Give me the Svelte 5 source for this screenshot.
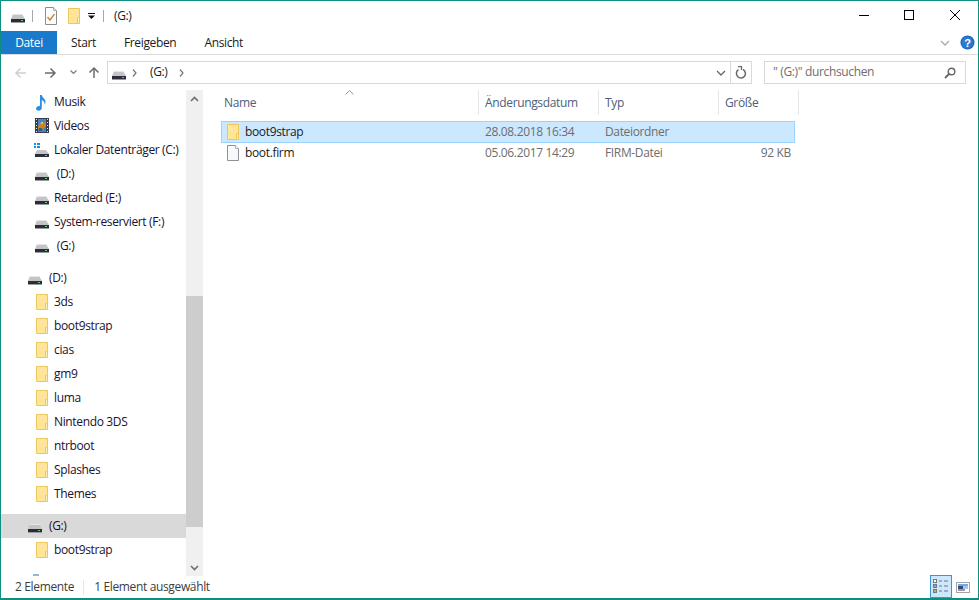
<script>
  const group1 = [
    { icon: 'music', label: 'Musik' },
    { icon: 'video', label: 'Videos' },
    { icon: 'sys', label: 'Lokaler Datenträger (C:)' },
    { icon: 'drive', label: ' (D:)' },
    { icon: 'drive', label: 'Retarded (E:)' },
    { icon: 'drive', label: 'System-reserviert (F:)' },
    { icon: 'drive', label: ' (G:)' }
  ];
  const dItems = ['3ds', 'boot9strap', 'cias', 'gm9', 'luma', 'Nintendo 3DS', 'ntrboot', 'Splashes', 'Themes'];
</script>

{#snippet drive()}
  <svg class="ico" width="16" height="16" viewBox="0 0 16 16">
    <path d="M4 6h9l3 5H2z" fill="#c4c4c6" />
    <path d="M4 6h9l.6 1H3.400z" fill="#e6e6e8" />
    <rect x="2" y="11" width="14" height="3" fill="#2c2c3a" />
    <rect x="2" y="14" width="14" height="1" fill="#9a9aa2" />
    <rect x="12" y="12" width="2" height="1" fill="#5fd35f" />
  </svg>
{/snippet}

{#snippet folder()}
  <svg class="ico" width="16" height="16" viewBox="0 0 16 16">
    <path d="M3.500 .5h11v15h-11z" fill="#ffe595" stroke="#eec65c" />
    <path d="M12.500 9.500h2v6h-2z" fill="#fff2c0" stroke="#eec65c" />
    <rect x="7" y="4" width="1" height="1" fill="#fff6d8" />
  </svg>
{/snippet}

{#snippet navIcon(kind)}
  {#if kind === 'music'}
    <svg class="ico" width="16" height="17" viewBox="0 0 16 17">
      <path d="M7 1h1.800c.3 2.700 3.700 3.500 3.700 7 0 1-.3 1.900-.9 2.600.2-2.400-1.300-4-2.800-4.600V14c0 1.600-1.600 2.700-3.200 2.700S3 15.900 3 14.600s1.700-2.700 3.200-2.700c.4 0 .6.100.8.200z" fill="#2f8ddb" />
    </svg>
  {:else if kind === 'video'}
    <svg class="ico" width="16" height="16" viewBox="0 0 16 16">
      <rect x="2" y="0" width="14" height="15" fill="#3a3a4c" />
      <path d="M3 1.500h1M3 4.500h1M3 7.500h1M3 10.500h1M3 13.500h1M14 1.500h1M14 4.500h1M14 7.500h1M14 10.500h1M14 13.500h1" stroke="#e8e8e8" />
      <rect x="5" y="1" width="8" height="13" fill="#3c8ac8" />
      <path d="M5 8l3-4 2 2 3-3v5l-3 3H5z" fill="#c9822e" />
      <rect x="8" y="4" width="2" height="2" fill="#e8c25a" />
      <rect x="6" y="10" width="3" height="3" fill="#2c5f8f" />
    </svg>
  {:else if kind === 'sys'}
    <svg class="ico" width="16" height="16" viewBox="0 0 16 16">
      <path d="M4 8h9l3 4H2z" fill="#c4c4c6" />
      <rect x="2" y="12" width="14" height="3" fill="#2c2c3a" />
      <rect x="12" y="13" width="2" height="1" fill="#5fd35f" />
      <path d="M1 1h2v2H1zM4 1h3v2H4zM1 4h2v2H1zM4 4h3v2H4z" fill="#1b8fe0" />
    </svg>
  {:else}
    {@render drive()}
  {/if}
{/snippet}

{#snippet chevDown(color)}
  <svg width="10" height="6" viewBox="0 0 10 6"><path d="M1 1l4 4 4-4" fill="none" stroke={color} stroke-width="1.300" /></svg>
{/snippet}

<div class="window">
  <header class="titlebar">
    <div class="qat">
      {@render drive()}
      <span class="qsep"></span>
      <svg class="ico" width="16" height="18" viewBox="0 0 16 18">
        <path d="M2.500 .5h8l3 3v14h-11z" fill="#fcfcfc" stroke="#8e8a94" />
        <path d="M10.500 .5v3h3" fill="#e8e8e8" stroke="#b0b0b0" />
        <path d="M4.500 10l2.500 3 4.500-6" fill="none" stroke="#c48a42" stroke-width="1.400" />
      </svg>
      <span class="qfold">{@render folder()}</span>
      <svg class="qdrop" width="7" height="6" viewBox="0 0 7 6"><rect x="0" y="0" width="7" height="1" fill="#111" /><path d="M0 2.500h7L3.500 6z" fill="#111" /></svg>
      <span class="qsep last"></span>
      <span class="wintitle up1">(G:)</span>
    </div>
    <div class="controls">
      <svg class="ctl-min" width="10" height="10" viewBox="0 0 10 10"><path d="M0 5.500h10" stroke="#000" /></svg>
      <svg width="10" height="10" viewBox="0 0 10 10"><rect x=".5" y=".5" width="9" height="9" fill="none" stroke="#000" /></svg>
      <svg width="10" height="10" viewBox="0 0 10 10"><path d="M0 0l10 10M10 0L0 10" stroke="#000" stroke-width="1" /></svg>
    </div>
  </header>

  <div class="ribbon">
    <span class="tab active">Datei</span>
    <span class="tab start">Start</span>
    <span class="tab share">Freigeben</span>
    <span class="tab view">Ansicht</span>
    <span class="ribbon-right">
      {@render chevDown('#a9a9a9')}
      <svg class="help" width="15" height="15" viewBox="0 0 15 15">
        <circle cx="7.500" cy="7.500" r="7" fill="#1a63b8" />
        <circle cx="7.500" cy="7.500" r="6" fill="#2a7ad0" />
        <text x="7.500" y="11.500" text-anchor="middle" class="q">?</text>
      </svg>
    </span>
  </div>

  <div class="navbar">
    <svg class="arrow first" width="13" height="12" viewBox="0 0 13 12"><path d="M12 6H2M6.500 1.500L2 6l4.500 4.500" fill="none" stroke="#cfcfcf" stroke-width="1.500" /></svg>
    <svg class="arrow" width="13" height="12" viewBox="0 0 13 12"><path d="M1 6h10M6.500 1.500L11 6l-4.500 4.500" fill="none" stroke="#6f6a72" stroke-width="1.500" /></svg>
    <span class="recent"><svg width="7" height="5" viewBox="0 0 7 5"><path d="M.5 .5l3 3 3-3" fill="none" stroke="#7a7a7a" stroke-width="1.200" /></svg></span>
    <svg class="arrow up" width="12" height="13" viewBox="0 0 12 13"><path d="M6 12V2M1.500 6.500L6 2l4.500 4.500" fill="none" stroke="#6f6a72" stroke-width="1.500" /></svg>

    <div class="address">
      <span class="crumb-ico">{@render drive()}</span>
      <svg class="crumb-sep" width="5" height="8" viewBox="0 0 5 8"><path d="M1 .5l3 3.500-3 3.500" fill="none" stroke="#777" stroke-width="1.200" /></svg>
      <span class="crumb up1">(G:)</span>
      <svg class="crumb-sep" width="5" height="8" viewBox="0 0 5 8"><path d="M1 .5l3 3.500-3 3.500" fill="none" stroke="#777" stroke-width="1.200" /></svg>
      <span class="grow"></span>
      <span class="addr-drop">{@render chevDown('#666')}</span>
      <span class="addr-refresh">
        <svg width="12" height="13" viewBox="0 0 12 13"><path d="M3.500 3.200A4.500 4.500 0 1 0 8 3" fill="none" stroke="#6b6b6b" stroke-width="1.500" transform="translate(0 .5)" /><path d="M3 .5h3.500V4" fill="none" stroke="#6b6b6b" stroke-width="1.300" /></svg>
      </span>
    </div>
    <div class="search">
      <span class="placeholder up1">" (G:)" durchsuchen</span>
      <svg width="12" height="12" viewBox="0 0 12 12"><circle cx="7.500" cy="4.500" r="3.300" fill="none" stroke="#666" stroke-width="1.400" /><path d="M5 7L1 11" stroke="#666" stroke-width="1.800" /></svg>
    </div>
  </div>

  <div class="main">
    <aside class="nav">
      <div class="tree">
        <div class="group">
          {#each group1 as item}
            <div class="row lvl2">
              <span class="slot">{@render navIcon(item.icon)}</span>
              <span class="label up1">{item.label}</span>
            </div>
          {/each}
        </div>
        <div class="group">
          <div class="row lvl1">
            <span class="slot">{@render drive()}</span>
            <span class="label up1">(D:)</span>
          </div>
          {#each dItems as name}
            <div class="row lvl2">
              <span class="slot">{@render folder()}</span>
              <span class="label up1">{name}</span>
            </div>
          {/each}
        </div>
        <div class="group">
          <div class="row lvl1 current">
            <span class="slot">{@render drive()}</span>
            <span class="label up1">(G:)</span>
          </div>
          <div class="row lvl2">
            <span class="slot">{@render folder()}</span>
            <span class="label up1">boot9strap</span>
          </div>
        </div>
        <div class="group">
          <div class="row lvl1">
            <span class="slot"><span class="net"></span></span>
          </div>
        </div>
      </div>
      <div class="scrollbar">
        <span class="sb-btn"><svg width="9" height="6" viewBox="0 0 9 6"><path d="M1 5l3.500-3.500L8 5" fill="none" stroke="#6e6e6e" stroke-width="1.600" /></svg></span>
        <span class="sb-space top"></span>
        <span class="sb-thumb"></span>
        <span class="sb-space bottom"></span>
        <span class="sb-btn"><svg width="9" height="6" viewBox="0 0 9 6"><path d="M1 1l3.500 3.500L8 1" fill="none" stroke="#6e6e6e" stroke-width="1.600" /></svg></span>
      </div>
    </aside>

    <section class="files">
      <div class="thead">
        <svg class="sort" width="9" height="5" viewBox="0 0 9 5"><path d="M.5 4.500l4-4 4 4" fill="none" stroke="#9a9a9a" /></svg>
        <span class="th c-name"><span class="up1">Name</span></span>
        <span class="th c-date"><span class="up1">Änderungsdatum</span></span>
        <span class="th c-type"><span class="up1">Typ</span></span>
        <span class="th c-size"><span class="up1">Größe</span></span>
      </div>
      <div class="tr selected">
        <span class="td c-name"><span class="file-ico">{@render folder()}</span><span class="fname up1">boot9strap</span></span>
        <span class="td c-date dim"><span class="up1">28.08.2018 16:34</span></span>
        <span class="td c-type dim"><span class="up1">Dateiordner</span></span>
        <span class="td c-size"></span>
      </div>
      <div class="tr">
        <span class="td c-name">
          <span class="file-ico">
            <svg class="ico" width="16" height="16" viewBox="0 0 16 16">
              <path d="M3.500 .5h8l3 3v12h-11z" fill="#f6f9fb" stroke="#8f8f95" />
              <path d="M11.500 .5v3h3" fill="#fff" stroke="#b0b0b4" />
            </svg>
          </span>
          <span class="fname up1">boot.firm</span>
        </span>
        <span class="td c-date dim"><span class="up1">05.06.2017 14:29</span></span>
        <span class="td c-type dim"><span class="up1">FIRM-Datei</span></span>
        <span class="td c-size dim right"><span class="up1">92 KB</span></span>
      </div>
    </section>
  </div>

  <footer class="status">
    <span class="up1">2 Elemente</span>
    <span class="stsep"></span>
    <span class="up1">1 Element ausgewählt</span>
    <span class="grow"></span>
    <span class="view-btn on">
      <svg width="16" height="15" viewBox="0 0 16 15">
        <rect x=".5" y=".5" width="3" height="3" fill="#fff" stroke="#777" />
        <rect x=".5" y="5.500" width="3" height="3" fill="#6ab0e8" stroke="#777" />
        <rect x=".5" y="10.500" width="3" height="3" fill="#e8a030" stroke="#777" />
        <path d="M6 2h3M11 2h4M6 7h3M11 7h4M6 12h3M11 12h4" stroke="#7a6a8a" />
      </svg>
    </span>
    <span class="view-btn plain">
      <svg width="14" height="11" viewBox="0 0 14 11">
        <rect x=".5" y=".5" width="13" height="10" fill="#fff" stroke="#a5a5a5" stroke-width="1" />
        <rect x="2" y="2" width="10" height="2" fill="#6ab0e8" />
        <rect x="2" y="4" width="5" height="3" fill="#3a4a7a" />
        <rect x="7" y="4" width="5" height="3" fill="#a8c8e8" />
        <rect x="2" y="7" width="7" height="2" fill="#9a9aa8" />
      </svg>
    </span>
  </footer>
</div>

<style>
  :global(body) {
    margin: 0;
    background: #fff;
  }
  .window {
    box-sizing: border-box;
    width: 979px;
    height: 600px;
    border: 1px solid #0e8f80;
    border-bottom-width: 2px;
    background: #fff;
    display: flex;
    flex-direction: column;
    overflow: hidden;
    font-family: "Open Sans", "Noto Sans", sans-serif;
    font-size: 12px;
    letter-spacing: -0.35px;
    color: #1a1a1a;
  }
  .ico {
    display: block;
    flex: none;
  }
  .grow {
    flex: 1;
  }
  .up1 {
    margin-top: -2px;
  }

  .titlebar {
    height: 30px;
    flex: none;
    display: flex;
    align-items: center;
    justify-content: space-between;
  }
  .qat {
    display: flex;
    align-items: center;
    padding-left: 8px;
  }
  .qsep {
    width: 1px;
    height: 12px;
    background: #a8a8a8;
    margin: 0 10px 0 7px;
  }
  .qsep.last {
    margin: 0 10px 0 8px;
  }
  .qfold {
    margin-left: 6px;
  }
  .qdrop {
    margin-left: 7px;
  }
  .controls {
    display: flex;
    align-items: center;
    gap: 36px;
    padding-right: 18px;
    margin-top: -2px;
  }
  .ctl-min {
    margin-right: -1px;
  }

  .ribbon {
    height: 23px;
    flex: none;
    display: flex;
    align-items: stretch;
    border-bottom: 1px solid #dadbdc;
  }
  .tab {
    display: flex;
    align-items: center;
  }
  .tab.active {
    width: 56px;
    justify-content: center;
    background: #1979ca;
    color: #fff;
  }
  .tab.start {
    margin-left: 14px;
  }
  .tab.share {
    margin-left: 28px;
  }
  .tab.view {
    margin-left: 28px;
  }
  .ribbon-right {
    margin-left: auto;
    display: flex;
    align-items: center;
    gap: 10px;
    padding-right: 3px;
  }
  .help .q {
    font-family: "Liberation Sans", sans-serif;
    font-weight: 700;
    font-size: 11px;
    fill: #fff;
  }

  .navbar {
    height: 35px;
    flex: none;
    display: flex;
    align-items: center;
    padding-right: 12px;
  }
  .arrow {
    display: block;
    flex: none;
    margin-left: 17px;
  }
  .arrow.first {
    margin-left: 13px;
  }
  .recent {
    margin-left: 13px;
    display: flex;
  }
  .arrow.up {
    margin-left: 11px;
  }
  .address {
    margin-left: 7px;
    flex: 1;
    height: 23px;
    box-sizing: border-box;
    border: 1px solid #d9d9d9;
    display: flex;
    align-items: center;
    padding-left: 2px;
  }
  .crumb-sep {
    flex: none;
    display: block;
    margin-left: 6px;
  }
  .crumb {
    margin-left: 13px;
    margin-right: 5px;
  }
  .addr-drop {
    display: flex;
    align-items: center;
    justify-content: center;
    width: 20px;
    height: 100%;
    box-sizing: border-box;
    border-right: 1px solid #d9d9d9;
  }
  .addr-refresh {
    width: 20px;
    display: flex;
    align-items: center;
    justify-content: center;
  }
  .search {
    margin-left: 12px;
    flex: none;
    width: 202px;
    height: 23px;
    box-sizing: border-box;
    border: 1px solid #d9d9d9;
    display: flex;
    align-items: center;
    justify-content: space-between;
    padding: 0 9px 0 8px;
    color: #6d6d6d;
  }

  .main {
    flex: 1;
    min-height: 0;
    display: flex;
    overflow: hidden;
  }
  .nav {
    width: 202px;
    flex: none;
    display: flex;
  }
  .tree {
    width: 185px;
    flex: none;
    overflow: hidden;
  }
  .group + .group {
    margin-top: 8px;
  }
  .row {
    height: 24px;
    display: flex;
    align-items: center;
    color: #1a1030;
  }
  .label {
    white-space: pre;
  }
  .slot {
    flex: none;
    width: 16px;
    display: block;
  }
  .lvl2 {
    padding-left: 32px;
  }
  .lvl2 .label {
    margin-left: 5px;
  }
  .lvl1 {
    padding-left: 25px;
  }
  .lvl1 .label {
    margin-left: 7px;
  }
  .current {
    background: #d9d9d9;
  }
  .net {
    display: block;
    width: 6px;
    height: 16px;
    margin-left: 7px;
    background: #8fb8dc;
  }

  .scrollbar {
    width: 17px;
    flex: none;
    background: #f0f0f0;
    display: flex;
    flex-direction: column;
    align-items: stretch;
  }
  .sb-btn {
    height: 17px;
    flex: none;
    display: flex;
    align-items: center;
    justify-content: center;
  }
  .sb-space.top {
    height: 189px;
    flex: none;
  }
  .sb-thumb {
    height: 231px;
    flex: none;
    background: #cdcdcd;
  }
  .sb-space.bottom {
    flex: 1;
  }

  .files {
    flex: 1;
    min-width: 0;
    padding-left: 18px;
  }
  .thead {
    height: 25px;
    display: flex;
    position: relative;
    margin-bottom: 6px;
  }
  .sort {
    position: absolute;
    left: 124px;
    top: 0;
    display: block;
  }
  .th {
    display: flex;
    align-items: center;
    color: #4c607a;
    padding-left: 6px;
    padding-top: 2px;
    box-sizing: border-box;
    border-right: 1px solid #e5e5e5;
  }
  .c-name {
    width: 258px;
    flex: none;
  }
  .th.c-name {
    padding-left: 3px;
  }
  .c-date,
  .c-type {
    width: 120px;
    flex: none;
  }
  .c-size {
    width: 80px;
    flex: none;
  }
  .tr {
    display: flex;
    height: 20px;
    width: 574px;
    align-items: center;
  }
  .tr.selected {
    height: 20px;
    width: 572px;
    background: #cce8ff;
    border: 1px solid #99d1ff;
  }
  .td {
    display: flex;
    align-items: center;
    padding-left: 6px;
    box-sizing: border-box;
  }
  .td.c-name {
    padding-left: 3px;
  }
  .selected .td.c-name {
    width: 257px;
    padding-left: 2px;
  }
  .td.c-size {
    width: 76px;
  }
  .fname {
    margin-left: 5px;
  }
  .dim {
    color: #6d6d6d;
  }
  .right {
    justify-content: flex-end;
    padding-right: 4px;
  }

  .status {
    height: 22px;
    flex: none;
    display: flex;
    align-items: center;
    padding-left: 14px;
    padding-right: 8px;
    color: #3c3c3c;
  }
  .stsep {
    width: 1px;
    height: 15px;
    background: #e6e6e6;
    margin: 0 10px 0 9px;
  }
  .view-btn {
    display: flex;
    align-items: center;
    justify-content: center;
    box-sizing: border-box;
  }
  .view-btn.on {
    width: 22px;
    height: 23px;
    align-self: flex-end;
    background: #cce8ff;
    border: 1px solid #3d95d8;
  }
  .view-btn.plain {
    width: 14px;
    margin-left: 4px;
  }
</style>
